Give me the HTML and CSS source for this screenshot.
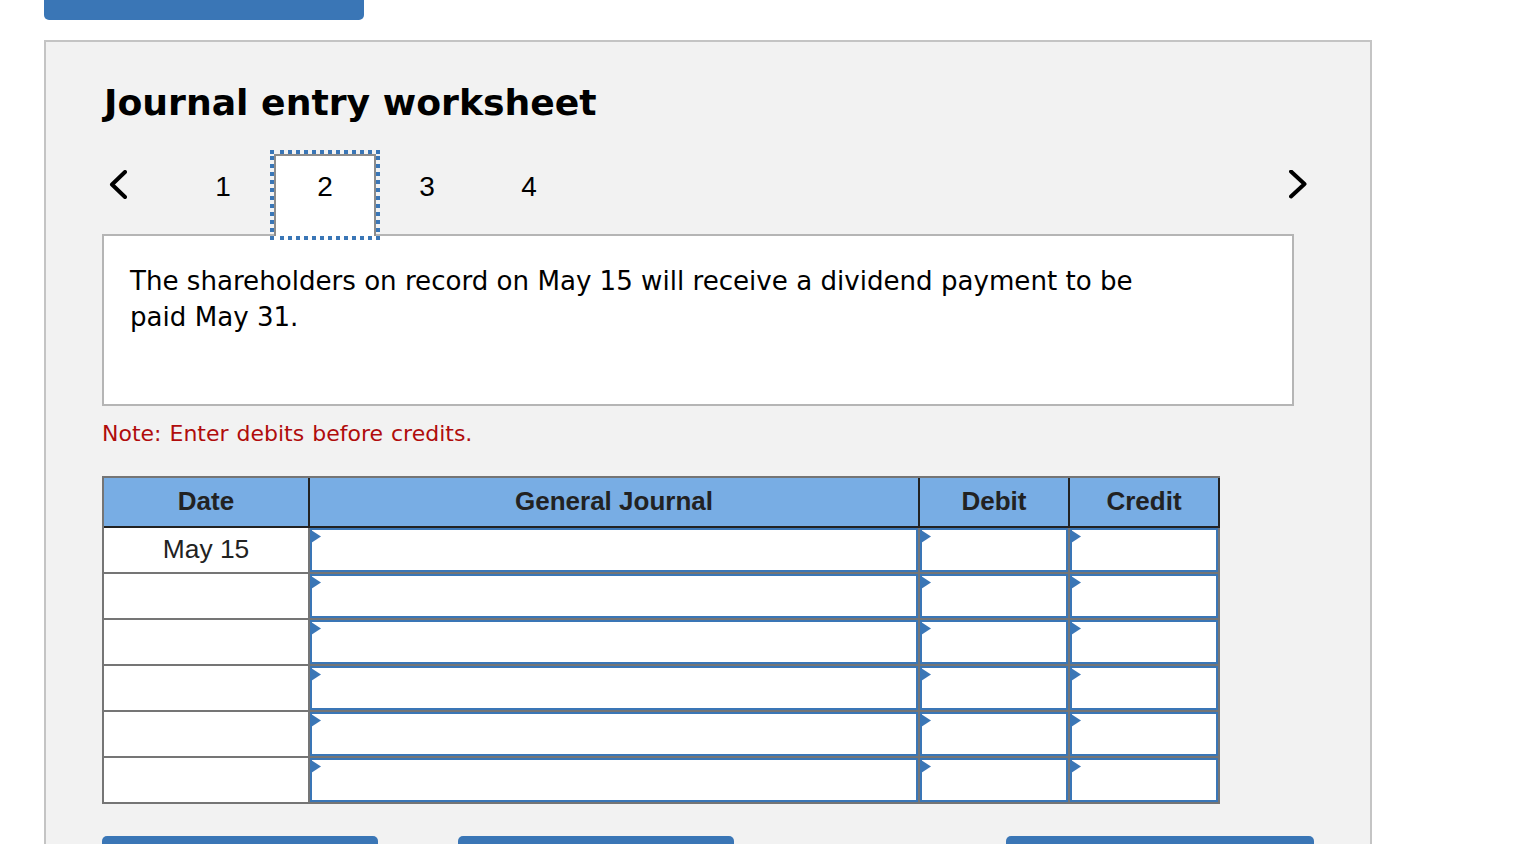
FILE: index.html
```html
<!DOCTYPE html>
<html lang="en">
<head>
    <meta charset="UTF-8">
    <meta name="viewport" content="width=device-width, initial-scale=1.0">
    <title>Journal entry worksheet</title>
    <link rel="stylesheet" href="styles.css">
</head>
<body>
    <div class="top-btn"></div>

    <div class="panel">
        <h1 class="title">Journal entry worksheet</h1>

        <!-- step tabs -->
        <div class="steps">
            <div class="arrow">
                <svg width="20" height="30" viewBox="0 0 20 30"><path d="M18 2 L5 14.5 L18 27"/></svg>
            </div>
            <div class="tabs">
                <div class="tab">1</div>
                <div class="tab active">2</div>
                <div class="tab">3</div>
                <div class="tab">4</div>
            </div>
            <div class="arrow">
                <svg width="20" height="30" viewBox="0 0 20 30"><path d="M2 1.5 L15.5 14 L2 26.5"/></svg>
            </div>
        </div>

        <div class="desc">The shareholders on record on May 15 will receive a dividend payment to be paid May 31.</div>

        <p class="note">Note: Enter debits before credits.</p>

        <table class="journal">
            <colgroup>
                <col class="col-date">
                <col class="col-acct">
                <col class="col-amt">
                <col class="col-amt">
            </colgroup>
            <thead>
                <tr>
                    <th>Date</th>
                    <th>General Journal</th>
                    <th>Debit</th>
                    <th>Credit</th>
                </tr>
            </thead>
            <tbody>
                <tr>
                    <td class="date">May 15</td>
                    <td class="entry"><input type="text"></td>
                    <td class="entry"><input type="text"></td>
                    <td class="entry"><input type="text"></td>
                </tr>
                <tr>
                    <td class="date"></td>
                    <td class="entry"><input type="text"></td>
                    <td class="entry"><input type="text"></td>
                    <td class="entry"><input type="text"></td>
                </tr>
                <tr>
                    <td class="date"></td>
                    <td class="entry"><input type="text"></td>
                    <td class="entry"><input type="text"></td>
                    <td class="entry"><input type="text"></td>
                </tr>
                <tr>
                    <td class="date"></td>
                    <td class="entry"><input type="text"></td>
                    <td class="entry"><input type="text"></td>
                    <td class="entry"><input type="text"></td>
                </tr>
                <tr>
                    <td class="date"></td>
                    <td class="entry"><input type="text"></td>
                    <td class="entry"><input type="text"></td>
                    <td class="entry"><input type="text"></td>
                </tr>
                <tr>
                    <td class="date"></td>
                    <td class="entry"><input type="text"></td>
                    <td class="entry"><input type="text"></td>
                    <td class="entry"><input type="text"></td>
                </tr>
            </tbody>
        </table>

        <div class="actions">
            <div class="btn"></div>
            <div class="btn"></div>
            <div class="btn wide"></div>
        </div>
    </div>
</body>
</html>
```

FILE: styles.css
```css
* {
    box-sizing: border-box;
}
html, body {
    height: 844px;
    overflow: hidden;
}
body {
    margin: 0;
    padding: 0 0 0 44px;
    background-color: #fff;
    font-family: "DejaVu Sans", sans-serif;
    color: #000;
}
.top-btn {
    width: 320px;
    height: 20px;
    background-color: #3a76b6;
    border-radius: 0 0 5px 5px;
}
/* panel */
.panel {
    width: 1328px;
    margin-top: 20px;
    padding: 37px 56px 0;
    background-color: #f2f2f2;
    border: 2px solid #c4c4c4;
}
.title {
    margin: 0 0 0 2px;
    font-size: 36.2px;
    line-height: 48px;
    font-weight: bold;
}
/* tabs */
.steps {
    display: flex;
    align-items: flex-start;
    justify-content: space-between;
    height: 82px;
    margin-top: 27px;
    padding: 0 5px;
    position: relative;
    z-index: 1;
}
.arrow {
    height: 30px;
    margin-top: 16px;
}
.arrow svg {
    display: block;
}
.arrow path {
    fill: none;
    stroke: #000;
    stroke-width: 4;
    stroke-linecap: round;
    stroke-linejoin: round;
}
.tabs {
    display: flex;
    position: absolute;
    left: 70px;
    top: 0;
}
.tab {
    width: 102px;
    height: 82px;
    padding-top: 16px;
    font-family: "Liberation Sans", sans-serif;
    font-size: 28px;
    line-height: 34px;
    text-align: center;
}
.tab.active {
    position: relative;
    background-color: #fff;
    border: 2px solid #8c8c8c;
    border-bottom: 0;
    padding-top: 14px;
}
/* dotted focus ring, 4px dots on an 8px step */
.tab.active::after {
    content: "";
    position: absolute;
    left: -6px;
    right: -6px;
    top: -6px;
    bottom: -4px;
    background:
        linear-gradient(#3a76b6, #3a76b6) left top / 4px 4px no-repeat,
        repeating-linear-gradient(90deg, #3a76b6 0 4px, transparent 4px 8px) left 10px top / 100px 4px no-repeat,
        repeating-linear-gradient(90deg, #3a76b6 0 4px, transparent 4px 8px) left 10px bottom / 100px 4px no-repeat,
        repeating-linear-gradient(180deg, #3a76b6 0 4px, transparent 4px 8px) left top 6px / 4px 84px no-repeat,
        repeating-linear-gradient(180deg, #3a76b6 0 4px, transparent 4px 8px) right top 6px / 4px 84px no-repeat;
}
/* question box */
.desc {
    width: 1192px;
    height: 172px;
    margin-top: -2px;
    padding: 27px 150px 0 26px;
    background-color: #fff;
    border: 2px solid #b5b5b5;
    font-size: 26.1px;
    line-height: 36px;
}
.note {
    margin: 13px 0 0;
    font-size: 22px;
    line-height: 30px;
    word-spacing: 1px;
    color: #b00c0c;
}
/* journal table */
.journal {
    width: 1118px;
    margin-top: 27px;
    table-layout: fixed;
    border-collapse: separate;
    border-spacing: 0;
    border-top: 2px solid #757575;
    border-left: 2px solid #757575;
    font-family: "Liberation Sans", sans-serif;
    color: #222;
}
.col-date {
    width: 206px;
}
.col-acct {
    width: 610px;
}
.col-amt {
    width: 150px;
}
.journal th {
    height: 50px;
    padding: 0 0 2px;
    background-color: #78ade4;
    border-right: 2px solid #222;
    border-bottom: 2px solid #222;
    font-size: 26px;
    font-weight: bold;
    text-align: center;
}
.journal td {
    height: 46px;
    padding: 0;
    background-color: #fff;
    border-right: 2px solid #757575;
    border-bottom: 2px solid #757575;
}
.journal td.date {
    padding-bottom: 2px;
    font-size: 26.4px;
    text-align: center;
}
.entry {
    position: relative;
}
.entry input {
    display: block;
    width: 100%;
    height: 44px;
    margin: 0;
    padding: 0 12px;
    background-color: #fff;
    border: 2px solid #3a76b6;
    border-radius: 0;
    outline: none;
}
.entry::before {
    content: "";
    position: absolute;
    left: 1px;
    top: 2px;
    width: 10px;
    height: 13px;
    background-color: #3a76b6;
    clip-path: polygon(0 0, 100% 50%, 0 100%);
}
/* bottom buttons */
.actions {
    display: flex;
    gap: 80px;
    margin-top: 32px;
}
.btn {
    width: 276px;
    height: 40px;
    background-color: #3a76b6;
    border-radius: 5px;
}
.btn.wide {
    width: 308px;
    margin-left: auto;
}
```
